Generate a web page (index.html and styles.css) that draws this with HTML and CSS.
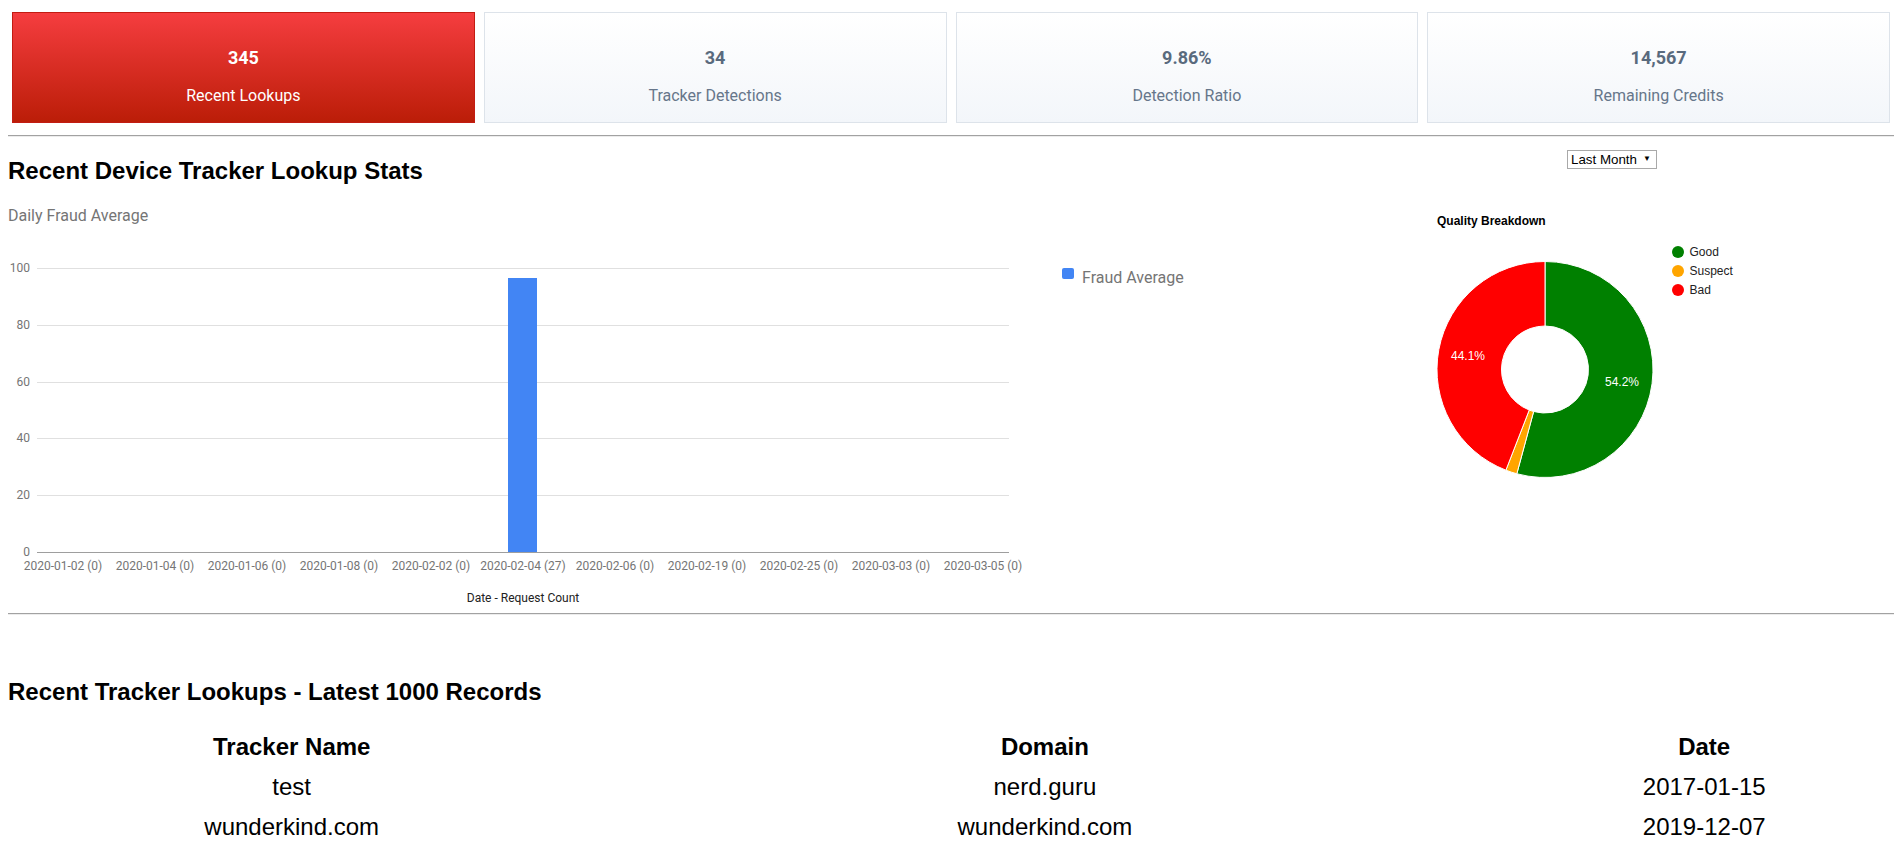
FILE: index.html
```html
<!DOCTYPE html>
<html>
<head>
<meta charset="utf-8">
<title>Device Tracker Dashboard</title>
<link rel="stylesheet" href="styles.css">
</head>
<body>
<div class="cards">
  <div class="card card-active">
    <div class="card-num">345</div>
    <div class="card-label">Recent Lookups</div>
  </div>
  <div class="card">
    <div class="card-num">34</div>
    <div class="card-label">Tracker Detections</div>
  </div>
  <div class="card">
    <div class="card-num">9.86%</div>
    <div class="card-label">Detection Ratio</div>
  </div>
  <div class="card">
    <div class="card-num">14,567</div>
    <div class="card-label">Remaining Credits</div>
  </div>
</div>
<hr class="rule rule-top">
<div class="stats">
  <div class="stats-left">
    <h2 class="heading">Recent Device Tracker Lookup Stats</h2>
    <svg class="bar-chart" width="1200" height="420" viewBox="0 0 1200 420">
      <text class="chart-title" x="0" y="36">Daily Fraud Average</text>
      <g class="grid">
        <line x1="29" y1="83.5" x2="1001" y2="83.5"/>
        <line x1="29" y1="140.5" x2="1001" y2="140.5"/>
        <line x1="29" y1="197.5" x2="1001" y2="197.5"/>
        <line x1="29" y1="253.5" x2="1001" y2="253.5"/>
        <line x1="29" y1="310.5" x2="1001" y2="310.5"/>
      </g>
      <g class="ylab">
        <text x="22" y="87">100</text>
        <text x="22" y="144">80</text>
        <text x="22" y="201">60</text>
        <text x="22" y="257">40</text>
        <text x="22" y="314">20</text>
        <text x="22" y="371">0</text>
      </g>
      <rect class="bar" x="500" y="93" width="29" height="274"/>
      <line class="baseline" x1="29" y1="367.5" x2="1001" y2="367.5"/>
      <g class="xlab">
        <text x="55" y="385">2020-01-02 (0)</text>
        <text x="147" y="385">2020-01-04 (0)</text>
        <text x="239" y="385">2020-01-06 (0)</text>
        <text x="331" y="385">2020-01-08 (0)</text>
        <text x="423" y="385">2020-02-02 (0)</text>
        <text x="515" y="385">2020-02-04 (27)</text>
        <text x="607" y="385">2020-02-06 (0)</text>
        <text x="699" y="385">2020-02-19 (0)</text>
        <text x="791" y="385">2020-02-25 (0)</text>
        <text x="883" y="385">2020-03-03 (0)</text>
        <text x="975" y="385">2020-03-05 (0)</text>
      </g>
      <text class="axis-title" x="515" y="417">Date - Request Count</text>
      <rect class="legend-swatch" x="1054" y="83" width="12" height="11" rx="2"/>
      <text class="legend-text" x="1074" y="98">Fraud Average</text>
    </svg>
  </div>
  <div class="stats-right">
    <span class="range-wrap">
      <select class="range">
        <option>Last Month</option>
      </select>
    </span>
    <svg class="pie-chart" width="494" height="320" viewBox="0 0 494 320">
      <text class="pie-title" x="37" y="50">Quality Breakdown</text>
      <g class="slices">
        <path fill="#008000" d="M145,86.5 A108,108 0 1,1 116.82,298.76 L133.65,236.5 A43.5,43.5 0 1,0 145,151 Z"/>
        <path fill="#ffa500" d="M116.82,298.76 A108,108 0 0,1 105.88,295.17 L129.24,235.05 A43.5,43.5 0 0,0 133.65,236.5 Z"/>
        <path fill="#ff0000" d="M105.88,295.17 A108,108 0 0,1 145,86.5 L145,151 A43.5,43.5 0 0,0 129.24,235.05 Z"/>
      </g>
      <text class="slice-label" x="222" y="211">54.2%</text>
      <text class="slice-label" x="68" y="185">44.1%</text>
      <circle cx="278" cy="77" r="6" fill="#008000"/>
      <circle cx="278" cy="96" r="6" fill="#ffa500"/>
      <circle cx="278" cy="115" r="6" fill="#ff0000"/>
      <text class="pie-legend" x="289.5" y="81">Good</text>
      <text class="pie-legend" x="289.5" y="100">Suspect</text>
      <text class="pie-legend" x="289.5" y="119">Bad</text>
    </svg>
  </div>
</div>
<hr class="rule rule-bottom">
<h2 class="heading heading-table">Recent Tracker Lookups - Latest 1000 Records</h2>
<table class="lookups">
  <colgroup>
    <col class="c1"><col class="c2"><col class="c3">
  </colgroup>
  <thead>
    <tr><th>Tracker Name</th><th>Domain</th><th>Date</th></tr>
  </thead>
  <tbody>
    <tr><td>test</td><td>nerd.guru</td><td>2017-01-15</td></tr>
    <tr><td>wunderkind.com</td><td>wunderkind.com</td><td>2019-12-07</td></tr>
  </tbody>
</table>
</body>
</html>
```
FILE: styles.css
```css
html, body {
  overflow: hidden;
}
body {
  margin: 8px;
  font-family: "Liberation Sans", Arial, sans-serif;
  color: #000;
  background: #fff;
}
.cards {
  display: grid;
  grid-template-columns: repeat(4, 1fr);
  gap: 9px;
  padding: 4px;
}
.card {
  height: 111px;
  box-sizing: border-box;
  border: 1px solid #dde3ea;
  background: linear-gradient(to bottom, #ffffff, #f3f6fa);
  display: flex;
  flex-direction: column;
  align-items: center;
  font-family: Roboto, "Liberation Sans", sans-serif;
}
.card-num {
  margin-top: 34px;
  font-size: 18px;
  font-weight: bold;
  line-height: 22px;
  color: #596a7d;
}
.card-label {
  margin-top: 17px;
  font-size: 16px;
  line-height: 20px;
  color: #66768a;
}
.card-active {
  border-color: #c21c12;
  background: linear-gradient(to bottom, #f53d3f, #bb1d08);
}
.card-active .card-num,
.card-active .card-label {
  color: #fff;
}
.rule {
  height: 0;
  border: 0;
  border-top: 1px solid #a2a2a2;
  border-bottom: 1px solid #ececec;
}
.rule-top {
  margin: 8px 0 0;
}
.rule-bottom {
  margin: 8px 0 0;
}
.stats {
  display: flex;
  align-items: flex-start;
}
.stats-left {
  width: 1200px;
  flex: none;
}
.heading {
  margin: 20px 0 0;
  font-size: 24px;
  line-height: 28px;
  font-weight: bold;
}
.bar-chart {
  display: block;
  font-family: Roboto, "Liberation Sans", sans-serif;
}
.chart-title {
  font-size: 16px;
  fill: #757575;
}
.grid line {
  stroke: #e0e0e0;
  stroke-width: 1;
}
.baseline {
  stroke: #9e9e9e;
  stroke-width: 1;
}
.ylab text {
  font-size: 12px;
  fill: #757575;
  text-anchor: end;
}
.xlab text {
  font-size: 12px;
  fill: #757575;
  text-anchor: middle;
}
.bar {
  fill: #4285f4;
}
.axis-title {
  font-size: 12px;
  fill: #222;
  text-anchor: middle;
}
.legend-swatch {
  fill: #4285f4;
}
.legend-text {
  font-size: 16px;
  fill: #757575;
}
.stats-right {
  display: flex;
  flex-direction: column;
  align-items: flex-start;
}
.range-wrap {
  position: relative;
  display: block;
  margin: 13px 0 0 359px;
}
.range-wrap::after {
  content: "\25BC";
  position: absolute;
  right: 6px;
  top: 4px;
  font-size: 8px;
  line-height: 10px;
  color: #000;
  pointer-events: none;
}
.range {
  display: block;
  -webkit-appearance: none;
  appearance: none;
  height: 19px;
  width: 90px;
  padding: 0 0 0 3px;
  font-family: "Liberation Sans", Arial, sans-serif;
  font-size: 13.33px;
  line-height: 17px;
  color: #000;
  background: #fff;
  border: 1px solid #a9a9a9;
  border-radius: 0;
}
.pie-chart {
  display: block;
  margin: 6px 0 0 192px;
  font-family: "Liberation Sans", Arial, sans-serif;
}
.pie-title {
  font-size: 12px;
  font-weight: bold;
  fill: #000;
}
.slices path {
  stroke: #fff;
  stroke-width: 1;
}
.slice-label {
  font-size: 12px;
  fill: #fff;
  text-anchor: middle;
}
.pie-legend {
  font-size: 12px;
  fill: #222;
}
.heading-table {
  margin: 63px 0 20px;
}
.lookups {
  width: 100%;
  table-layout: fixed;
  border-spacing: 2px;
  font-size: 24px;
}
.lookups .c1 { width: 30%; }
.lookups .c2 { width: 50%; }
.lookups .c3 { width: 20%; }
.lookups th,
.lookups td {
  padding: 5px 1px;
  line-height: 28px;
  text-align: center;
}
.lookups th {
  font-weight: bold;
}
```
